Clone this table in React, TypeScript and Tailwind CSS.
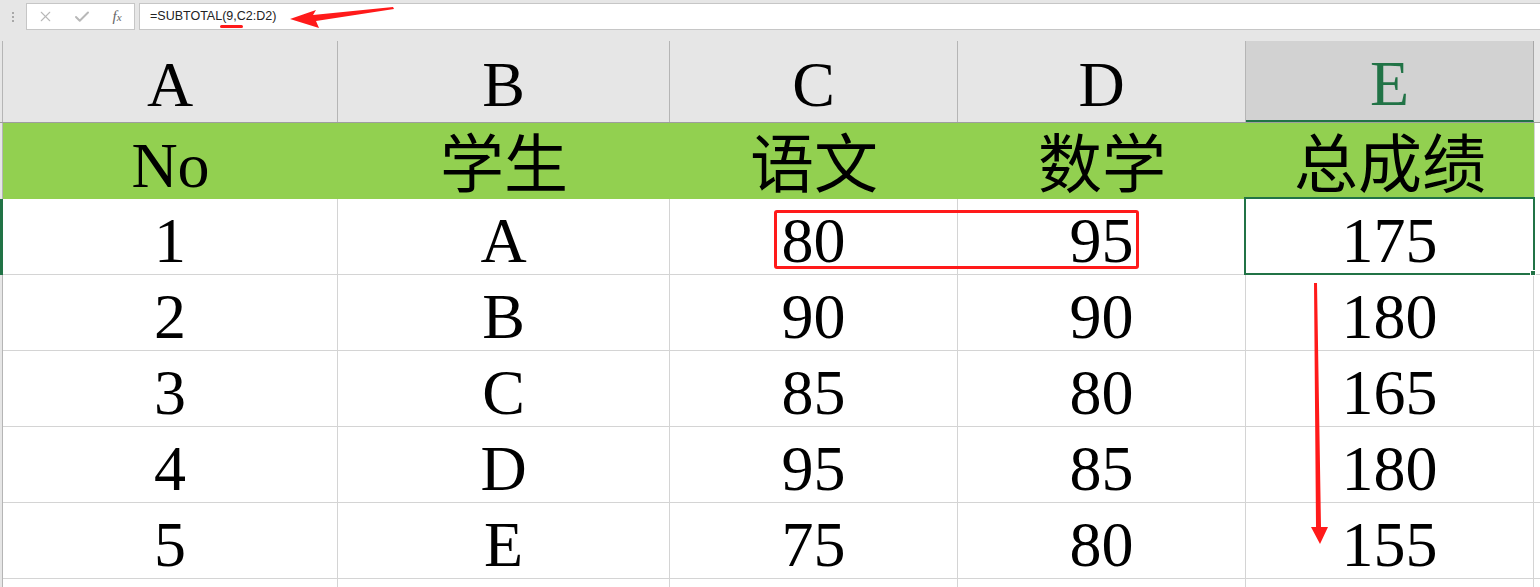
import { X, Check } from 'lucide-react';

const cols = [
  { key: 'A', w: 'w-[335px]', label: 'No' },
  { key: 'B', w: 'w-[332px]', label: '学生' },
  { key: 'C', w: 'w-[288px]', label: '语文' },
  { key: 'D', w: 'w-[288px]', label: '数学' },
  { key: 'E', w: 'w-[288px]', label: '总成绩' },
];

const rows = [
  ['1', 'A', '80', '95', '175'],
  ['2', 'B', '90', '90', '180'],
  ['3', 'C', '85', '80', '165'],
  ['4', 'D', '95', '85', '180'],
  ['5', 'E', '75', '80', '155'],
];

const big = "font-['Liberation_Serif','Noto_Sans_CJK_SC',serif] text-[64px] leading-none";

export default function App() {
  return (
    <div className="relative w-[1540px] h-[587px] overflow-hidden bg-[#e6e6e6] font-['Liberation_Sans',sans-serif]">
      {/* formula bar */}
      <div className="flex h-[41px] items-start pt-[3px]">
        <div className="w-[26px] h-[27px] flex flex-col items-center justify-center gap-[2px]">
          <span className="w-[2px] h-[2px] bg-[#a8a8a8]" />
          <span className="w-[2px] h-[2px] bg-[#a8a8a8]" />
          <span className="w-[2px] h-[2px] bg-[#a8a8a8]" />
        </div>
        <div className="w-[109px] h-[27px] bg-white border border-[#c6c6c6] flex items-center">
          <div className="w-[37px] flex justify-center text-[#b8b8b8]">
            <X size={17} strokeWidth={1.5} />
          </div>
          <div className="w-[36px] flex justify-center text-[#b8b8b8]">
            <Check size={18} strokeWidth={2.6} />
          </div>
          <div className="w-[34px] flex justify-center items-baseline font-['Liberation_Serif',serif] italic text-[15px] text-[#666]">
            f<span className="text-[11px]">x</span>
          </div>
        </div>
        <div className="ml-[4px] flex-1 h-[27px] bg-white border border-[#c6c6c6] border-r-0 flex items-center pl-[10px] text-[12.5px] text-[#222]">
          =SUBTOTAL(9,C2:D2)
        </div>
      </div>

      {/* column headers */}
      <div className="flex h-[82px] border-b border-[#9e9e9e]">
        <div className="w-[3px] border-r border-[#b5b5b5]" />
        {cols.map((c) =>
          c.key === 'E' ? (
            <div
              key={c.key}
              className={`${c.w} bg-[#d2d2d2] border-r border-[#a8a8a8] border-b-2 border-b-[#217346] flex items-center justify-center pt-[6px] text-[#217346] ${big}`}
            >
              {c.key}
            </div>
          ) : (
            <div key={c.key} className={`${c.w} border-r border-[#b5b5b5] flex items-center justify-center pt-[6px] text-black ${big}`}>
              {c.key}
            </div>
          )
        )}
        <div className="flex-1" />
      </div>

      {/* body */}
      <div className="bg-white">
        <div className="flex h-[76px]">
          <div className="w-[3px] bg-[#e6e6e6] border-r border-[#b5b5b5]" />
          <div className="flex bg-[#92d050]">
            {cols.map((c) => (
              <div key={c.key} className={`${c.w} flex items-center justify-center text-black ${big} ${c.key === 'A' ? 'pt-[10px]' : 'pt-[10px]'}`}>
                {c.label}
              </div>
            ))}
          </div>
          <div className="flex-1 border-l border-[#d4d4d4]" />
        </div>
        {rows.map((r, i) => (
          <div key={i} className="flex h-[76px]">
            <div className={`w-[3px] border-r ${i === 0 ? 'bg-[#217346] border-[#217346]' : 'bg-[#e6e6e6] border-[#b5b5b5]'}`} />
            {r.map((v, j) => (
              <div
                key={j}
                className={`${cols[j].w} border-r border-b border-[#d4d4d4] flex items-center justify-center pt-[8px] text-black ${big}`}
              >
                {v}
              </div>
            ))}
            <div className="flex-1 border-b border-[#d4d4d4]" />
          </div>
        ))}
        <div className="flex h-[12px]">
          <div className="w-[3px] bg-[#e6e6e6] border-r border-[#b5b5b5]" />
          {cols.map((c) => (
            <div key={c.key} className={`${c.w} border-r border-[#d4d4d4]`} />
          ))}
        </div>
      </div>

      {/* selection on E2 */}
      <div className="absolute left-[1244px] top-[197px] w-[291px] h-[78px] border-2 border-[#217346] pointer-events-none" />
      <div className="absolute left-[1530px] top-[270px] w-[6px] h-[6px] bg-[#217346] border border-white" />

      {/* red annotation box */}
      <div className="absolute left-[774px] top-[210px] w-[365px] h-[59px] border-[3px] border-[#ff1a1a] rounded-[3px]" />
      {/* underline under 9, */}
      <div className="absolute left-[220px] top-[25px] w-[23px] h-[3px] rounded-full bg-[#ff1a1a]" />

      {/* arrows */}
      <svg className="absolute left-0 top-0 pointer-events-none" width="1540" height="587">
        <polygon points="290,19 316,10 313,15 393,7 394,9 316,21 319,28" fill="#ff1a1a" />
        <polygon points="1314,283 1317,283 1321,527 1328,527 1320,544 1311,527 1316,527" fill="#ff1a1a" />
      </svg>
    </div>
  );
}
